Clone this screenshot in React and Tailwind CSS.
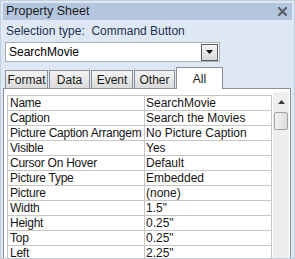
import React from 'react';

const rows = [
  ['Name', 'SearchMovie'],
  ['Caption', 'Search the Movies'],
  ['Picture Caption Arrangem', 'No Picture Caption'],
  ['Visible', 'Yes'],
  ['Cursor On Hover', 'Default'],
  ['Picture Type', 'Embedded'],
  ['Picture', '(none)'],
  ['Width', '1.5"'],
  ['Height', '0.25"'],
  ['Top', '0.25"'],
  ['Left', '2.25"'],
];

const tabs = [
  ['Format', 43],
  ['Data', 41],
  ['Event', 42],
  ['Other', 41],
];

export default function App() {
  return (
    <div className="w-[295px] h-[259px] bg-[#dee8f5] border border-[#c4cfdd] overflow-hidden flex flex-col text-[12px] text-[#1b1b1b] font-['Liberation_Sans',Arial,sans-serif]">
      {/* title bar */}
      <div className="mx-[2px] mt-[2px] h-[17px] bg-[#b4c6dd] flex items-center justify-between pl-[3px] pr-[5px]">
        <span className="text-[12.5px] text-[#1c1c1c]">Property Sheet</span>
        <svg width="9" height="9" viewBox="0 0 9 9">
          <path d="M1 1 L8 8 M8 1 L1 8" stroke="#5b5f66" strokeWidth="2.2" strokeLinecap="square" />
        </svg>
      </div>

      {/* selection type */}
      <div className="pl-[5px] h-[16px] mt-[3px] leading-[16px] text-[#1e3050] whitespace-pre">
        Selection type:  Command Button
      </div>

      {/* combo box */}
      <div className="ml-[4px] mt-[3px] w-[215px] h-[21px] bg-white border border-[#a7b0bc] flex items-center justify-between pl-[3px] pr-[1px]">
        <span className="text-black">SearchMovie</span>
        <div className="w-[17px] h-[17px] border border-[#5d5d5d] bg-gradient-to-b from-[#f6f6f6] to-[#d7d7d7] flex items-center justify-center">
          <svg width="7" height="4" viewBox="0 0 7 4">
            <path d="M0 0 H7 L3.5 4 Z" fill="#111" />
          </svg>
        </div>
      </div>

      {/* tabs */}
      <div className="ml-[4px] mt-[5px] flex items-end h-[21px] relative z-10">
        {tabs.map(([t, w]) => (
          <div
            key={t}
            className="h-[18px] mr-[1px] border border-b-0 border-[#8c9099] bg-gradient-to-b from-[#f4f4f4] to-[#dadada] flex items-center justify-center text-[#1b1b1b]"
            style={{ width: w }}
          >
            {t}
          </div>
        ))}
        <div className="w-[47px] h-[22px] border border-b-0 border-[#8c9099] bg-white flex items-center justify-center text-[#1b1b1b] -mb-[1px]">
          All
        </div>
      </div>

      {/* grid panel */}
      <div className="ml-[2px] w-[288px] flex-1 border border-b-0 border-[#8c9099] bg-white flex pl-[3px] pt-[3px]">
        <div className="pt-[3px]">
          <div className="grid grid-cols-[137px_127px] border-t border-l border-[#c6c6c6]">
            {rows.map(([k, v]) => (
              <React.Fragment key={k}>
                <div className="h-[15px] leading-[14px] pl-[2px] border-b border-r border-[#c6c6c6] whitespace-nowrap overflow-hidden text-[#151515] tracking-[-0.25px]">
                  {k}
                </div>
                <div className="h-[15px] leading-[14px] pl-[1px] border-b border-r border-[#c6c6c6] whitespace-nowrap overflow-hidden text-[#151515]">
                  {v}
                </div>
              </React.Fragment>
            ))}
          </div>
        </div>

        {/* scrollbar */}
        <div className="ml-[1px] w-[16px] bg-[#eeeeee] flex flex-col items-center">
          <div className="h-[20px] flex items-center justify-center">
            <svg width="7" height="4" viewBox="0 0 7 4">
              <path d="M0 4 H7 L3.5 0 Z" fill="#3a3a3a" />
            </svg>
          </div>
          <div className="w-[14px] h-[18px] rounded-[2px] border border-[#9fa3aa] bg-gradient-to-r from-[#f3f3f3] to-[#dcdcdc]" />
        </div>
      </div>
    </div>
  );
}
